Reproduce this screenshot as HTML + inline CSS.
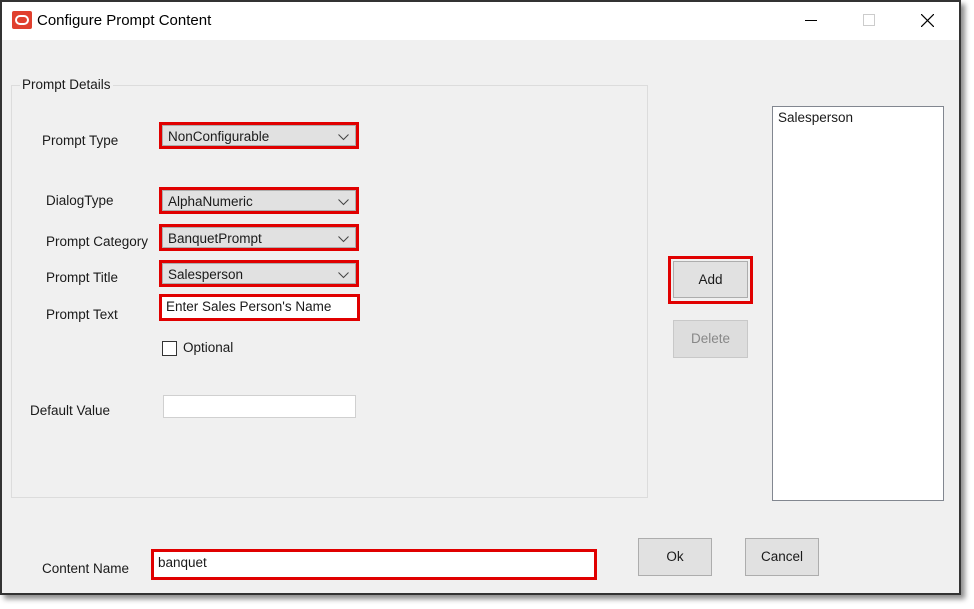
<!DOCTYPE html>
<html><head><style>
*{margin:0;padding:0;box-sizing:border-box}
body{width:974px;height:609px;background:#fff;font-family:"Liberation Sans",sans-serif;font-size:13.5px;color:#1a1a1a;position:relative;overflow:hidden}
.a{position:absolute}
.win{left:0;top:0;width:961px;height:595px;border:2px solid #333;background:#f0f0f0;box-shadow:4px 4px 5px rgba(0,0,0,.45)}
.title{left:0;top:0;width:957px;height:38px;background:#fff}
.red{border:3px solid #e00000}
.combo{position:absolute;left:0;top:0;right:0;bottom:0;background:#e1e1e1;border:1px solid #adadad;padding:3px 0 0 5px;font-size:13.5px}
.combo svg{position:absolute;right:6px;top:8px}
.btn{background:#e1e1e1;border:1px solid #adadad;text-align:center}
.lbl{font-size:13.5px}
</style></head><body>
<div class="a win"></div>
<div class="a title" style="left:2px;top:2px"></div>
<div class="a" style="left:12px;top:11px;width:20px;height:18px;background:#e0402e;border-radius:2px"></div>
<div class="a" style="left:15px;top:15px;width:14px;height:10px;border:2px solid #fff;border-radius:5px"></div>
<div class="a" style="left:37px;top:12px;font-size:15px;color:#000">Configure Prompt Content</div>
<div class="a" style="left:805px;top:20px;width:12px;height:1px;background:#000"></div>
<div class="a" style="left:863px;top:14px;width:12px;height:12px;border:1px solid #ccc"></div>
<svg class="a" style="left:921px;top:14px" width="13" height="13"><path d="M0 0L13 13M13 0L0 13" stroke="#000" stroke-width="1.2"/></svg>

<div class="a" style="left:11px;top:85px;width:637px;height:413px;border:1px solid #dcdcdc"></div>
<div class="a" style="left:20px;top:77px;background:#f0f0f0;padding:0 2px">Prompt Details</div>

<div class="a lbl" style="left:42px;top:133px">Prompt Type</div>
<div class="a lbl" style="left:46px;top:193px">DialogType</div>
<div class="a lbl" style="left:46px;top:234px">Prompt Category</div>
<div class="a lbl" style="left:46px;top:270px">Prompt Title</div>
<div class="a lbl" style="left:46px;top:307px">Prompt Text</div>
<div class="a lbl" style="left:30px;top:403px">Default Value</div>
<div class="a lbl" style="left:42px;top:561px">Content Name</div>

<div class="a red" style="left:159px;top:122px;width:200px;height:27px"><div class="combo">NonConfigurable<svg width="11" height="7"><path d="M0.5 0.5L5.5 5.5L10.5 0.5" fill="none" stroke="#444"/></svg></div></div>
<div class="a red" style="left:159px;top:187px;width:200px;height:27px"><div class="combo">AlphaNumeric<svg width="11" height="7"><path d="M0.5 0.5L5.5 5.5L10.5 0.5" fill="none" stroke="#444"/></svg></div></div>
<div class="a red" style="left:159px;top:224px;width:200px;height:27px"><div class="combo">BanquetPrompt<svg width="11" height="7"><path d="M0.5 0.5L5.5 5.5L10.5 0.5" fill="none" stroke="#444"/></svg></div></div>
<div class="a red" style="left:159px;top:260px;width:200px;height:27px"><div class="combo">Salesperson<svg width="11" height="7"><path d="M0.5 0.5L5.5 5.5L10.5 0.5" fill="none" stroke="#444"/></svg></div></div>
<div class="a red" style="left:159px;top:294px;width:201px;height:27px;background:#fff;padding:2px 0 0 4px">Enter Sales Person's Name</div>

<div class="a" style="left:162px;top:341px;width:15px;height:15px;border:1px solid #333;background:#fff"></div>
<div class="a lbl" style="left:183px;top:340px">Optional</div>
<div class="a" style="left:163px;top:395px;width:193px;height:23px;background:#fff;border:1px solid #d0d0d0"></div>

<div class="a" style="left:772px;top:106px;width:172px;height:395px;background:#fff;border:1px solid #828790;padding:3px 0 0 5px">Salesperson</div>

<div class="a red" style="left:668px;top:256px;width:85px;height:48px"></div>
<div class="a btn" style="left:673px;top:261px;width:75px;height:37px;line-height:35px">Add</div>
<div class="a btn" style="left:673px;top:320px;width:75px;height:38px;line-height:36px;color:#888;background:#ddd;border-color:#c8c8c8">Delete</div>

<div class="a btn" style="left:638px;top:538px;width:74px;height:38px;line-height:36px">Ok</div>
<div class="a btn" style="left:745px;top:538px;width:74px;height:38px;line-height:36px">Cancel</div>

<div class="a red" style="left:151px;top:549px;width:446px;height:31px;background:#fff;padding:3px 0 0 4px">banquet</div>
</body></html>
